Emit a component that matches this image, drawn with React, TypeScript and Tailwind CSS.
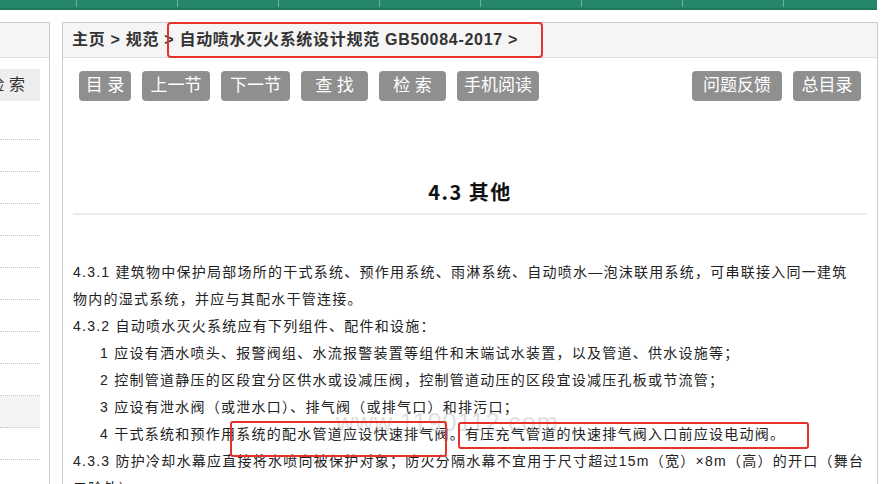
import clsx from 'clsx';

const navTicks = [77, 101, 101, 101, 101, 101, 101, 101, 101];

const leftButtons = [
    { label: '目 录', w: 'w-[52px]' },
    { label: '上一节', w: 'w-[68px]' },
    { label: '下一节', w: 'w-[69px]' },
    { label: '查 找', w: 'w-[67px]' },
    { label: '检 索', w: 'w-[67px]' },
    { label: '手机阅读', w: 'w-[82px]' },
];

const rightButtons = [
    { label: '问题反馈', w: 'w-[90px]' },
    { label: '总目录', w: 'w-[68px]' },
];

const lines: { text: string; indent?: boolean }[] = [
    { text: '4.3.1 建筑物中保护局部场所的干式系统、预作用系统、雨淋系统、自动喷水—泡沫联用系统，可串联接入同一建筑' },
    { text: '物内的湿式系统，并应与其配水干管连接。' },
    { text: '4.3.2 自动喷水灭火系统应有下列组件、配件和设施：' },
    { text: '1 应设有洒水喷头、报警阀组、水流报警装置等组件和末端试水装置，以及管道、供水设施等；', indent: true },
    { text: '2 控制管道静压的区段宜分区供水或设减压阀，控制管道动压的区段宜设减压孔板或节流管；', indent: true },
    { text: '3 应设有泄水阀（或泄水口）、排气阀（或排气口）和排污口；', indent: true },
    { text: '4 干式系统和预作用系统的配水管道应设快速排气阀。有压充气管道的快速排气阀入口前应设电动阀。', indent: true },
    { text: '4.3.3 防护冷却水幕应直接将水喷向被保护对象；防火分隔水幕不宜用于尺寸超过15m（宽）×8m（高）的开口（舞台' },
    { text: '口除外）。' },
];

function GrayButton({ label, w }: { label: string; w: string }) {
    return (
        <div className={clsx("h-[30px] rounded-[4px] bg-[#8f8f8f] text-white text-[17px] leading-[30px] text-center whitespace-pre", w)}>
            {label}
        </div>
    );
}

export default function App() {
    return (
        <div
            className="relative w-[882px] h-[484px] overflow-hidden bg-white text-[#222]"
            style={{ fontFamily: '"Liberation Sans", "Noto Sans CJK SC", sans-serif' }}
        >
            {/* Top nav strip */}
            <div className="flex w-[877px] h-[10px] bg-[#258669] border-b-2 border-[#1f7a5e] overflow-hidden">
                {navTicks.map((w, i) => (
                    <div key={i} className="h-[7px] shrink-0 border-r border-[#6fb39c]" style={{ width: w }} />
                ))}
            </div>

            <div className="flex mt-[12px]">
                {/* Sidebar (scrolled off to the left) */}
                <aside className="w-[50px] h-[480px] shrink-0 border-t border-r border-[#cccccc] overflow-hidden">
                    <div className="h-[35px] bg-[#f5f5f5] border-b border-[#dddddd]" />
                    <div className="w-[40px] mt-[11px] h-[32px] bg-[#eeeeee] flex items-center justify-end pr-[15px] text-[16px] text-[#333] whitespace-pre">
                        检 索
                    </div>
                    <div className="mt-[7px] w-[40px]">
                        {Array.from({ length: 12 }).map((_, i) => (
                            <div
                                key={i}
                                className={clsx(
                                    "h-[32px] border-b border-dotted border-[#c8c8c8]",
                                    i === 9 ? "bg-[#f4f4f4]" : ""
                                )}
                            />
                        ))}
                    </div>
                </aside>

                {/* Main panel */}
                <main className="ml-[12px] w-[816px] h-[480px] shrink-0 border-t border-l border-r border-[#cccccc]">
                    <div className="h-[35px] bg-[#f5f5f5] border-b border-[#dddddd] flex items-center px-[9px] text-[16px] font-bold text-[#333] tracking-[0.7px] whitespace-nowrap">
                        主页 &gt; 规范 &gt; 自动喷水灭火系统设计规范 GB50084-2017 &gt;
                    </div>

                    <div className="mt-[13px] px-[16px] flex justify-between">
                        <div className="flex gap-[11px]">
                            {leftButtons.map(b => <GrayButton key={b.label} {...b} />)}
                        </div>
                        <div className="flex gap-[11px]">
                            {rightButtons.map(b => <GrayButton key={b.label} {...b} />)}
                        </div>
                    </div>

                    <div className="px-[10px]">
                        <h1
                            className="mt-[77px] h-[28px] leading-[28px] text-center text-[20px] font-bold tracking-[1.5px] text-[#111]"
                            style={{ fontFamily: '"Noto Sans CJK SC", sans-serif' }}
                        >
                            4.3 其他
                        </h1>
                        <div className="mt-[7px] h-[2px] bg-[#ececec]" />

                        <div className="mt-[44px] text-[14px] leading-[27px] tracking-[1.25px]">
                            {lines.map((l, i) => (
                                <div key={i} className={clsx("whitespace-nowrap", l.indent ? "pl-[27px]" : "")}>
                                    {l.text}
                                </div>
                            ))}
                        </div>
                    </div>
                </main>
            </div>

            {/* Watermark */}
            <div className="absolute left-[336px] top-[404px] text-[25px] text-[#9a9a9a] opacity-30 pointer-events-none whitespace-nowrap tracking-[1px]">
                www.1190112.com
            </div>

            {/* Red annotation boxes */}
            <div className="absolute left-[167px] top-[22px] w-[376px] h-[36px] border-2 border-[#e5322d] rounded-[4px]" />
            <div className="absolute left-[230px] top-[421px] w-[217px] h-[36px] border-2 border-[#e5322d] rounded-[3px]" />
            <div className="absolute left-[458px] top-[422px] w-[351px] h-[27px] border-2 border-[#e5322d] rounded-[3px]" />
        </div>
    );
}
